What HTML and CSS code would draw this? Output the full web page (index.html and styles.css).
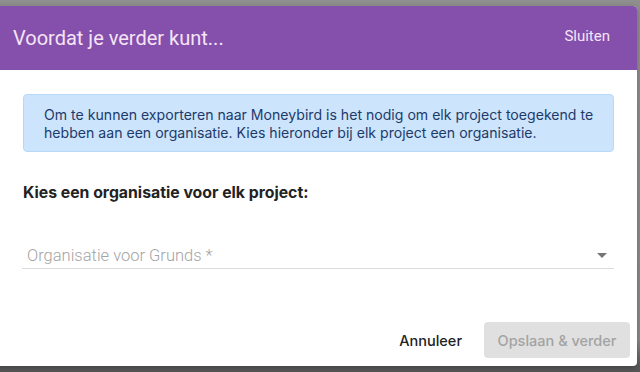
FILE: index.html
```html
<!DOCTYPE html>
<html lang="nl">
<head>
    <meta charset="UTF-8">
    <meta name="viewport" content="width=device-width, initial-scale=1.0">
    <title>Voordat je verder kunt</title>
    <link rel="stylesheet" href="styles.css">
</head>
<body>
    <div class="dialog">
        <header class="dialog-header">
            <h2>Voordat je verder kunt...</h2>
            <a href="#" class="close">Sluiten</a>
        </header>

        <main class="dialog-body">
            <div class="info">
                Om te kunnen exporteren naar Moneybird is het nodig om elk project toegekend te
                hebben aan een organisatie. Kies hieronder bij elk project een organisatie.
            </div>
            <h3>Kies een organisatie voor elk project:</h3>
            <div class="select">
                <span class="placeholder">Organisatie voor Grunds *</span>
                <svg class="arrow" width="10" height="5" viewBox="0 0 10 5"><path d="M0 0h10L5 5z" fill="#757575"/></svg>
            </div>
        </main>

        <footer class="dialog-footer">
            <button class="btn-text">Annuleer</button>
            <button class="btn-disabled" disabled>Opslaan &amp; verder</button>
        </footer>
    </div>
</body>
</html>
```

FILE: styles.css
```css
* {
    margin: 0;
    padding: 0;
    box-sizing: border-box;
}

body {
    font-family: "Inter", "Liberation Sans", sans-serif;
    background: linear-gradient(#8f8f8f 0, #8a8a8a 340px, #585858 366px);
    height: 372px;
    overflow: hidden;
    padding-top: 6px;
}

.dialog {
    width: 641px;
    height: 360px;
    margin-left: -4px;
    background: #ffffff;
    border-radius: 4px;
    display: flex;
    flex-direction: column;
    overflow: hidden;
    box-shadow: 0 2px 6px rgba(0, 0, 0, 0.25);
}

.dialog-header {
    height: 64px;
    background: #8450ac;
    display: flex;
    align-items: center;
    justify-content: space-between;
    padding: 0 27px 0 17px;
}

.dialog-header h2 {
    font-family: "Roboto", sans-serif;
    font-weight: 400;
    font-size: 20px;
    color: #f6e4f6;
}

.close {
    font-family: "Roboto", sans-serif;
    font-size: 15px;
    font-weight: 400;
    color: #f6e4f6;
    text-decoration: none;
    margin-top: -4px;
}

.dialog-body {
    flex: 1;
    padding: 24px 23px 0 27px;
}

.info {
    background: #cce5fd;
    border: 1px solid #b7d9f8;
    border-radius: 4px;
    padding: 11px 8px 9px 20px;
    font-size: 14.1px;
    line-height: 18px;
    color: #1e3a6a;
}

.dialog-body h3 {
    margin-top: 31px;
    font-size: 15.8px;
    line-height: 20px;
    font-weight: 700;
    color: #222222;
}

.select {
    margin-top: 32px;
    height: 34px;
    border-bottom: 1px solid #dcdcdc;
    display: flex;
    align-items: center;
    justify-content: space-between;
    padding: 7px 7px 0 5px;
    width: 592px;
    margin-left: -1px;
}

.placeholder {
    font-family: "Roboto", sans-serif;
    font-size: 16.5px;
    font-weight: 300;
    color: #a4a4a4;
}

.dialog-footer {
    display: flex;
    justify-content: flex-end;
    align-items: center;
    gap: 6px;
    padding: 0 7px 8px 0;
}

.dialog-footer button {
    height: 36px;
    border: none;
    border-radius: 4px;
    font-family: "Inter", "Liberation Sans", sans-serif;
    font-size: 14.5px;
    font-weight: 500;
}

.btn-text {
    background: none;
    color: #222222;
    padding: 0 16px;
}

.btn-disabled {
    width: 146px;
    background: #e0e0e0;
    color: #a3a3a3;
}
```
